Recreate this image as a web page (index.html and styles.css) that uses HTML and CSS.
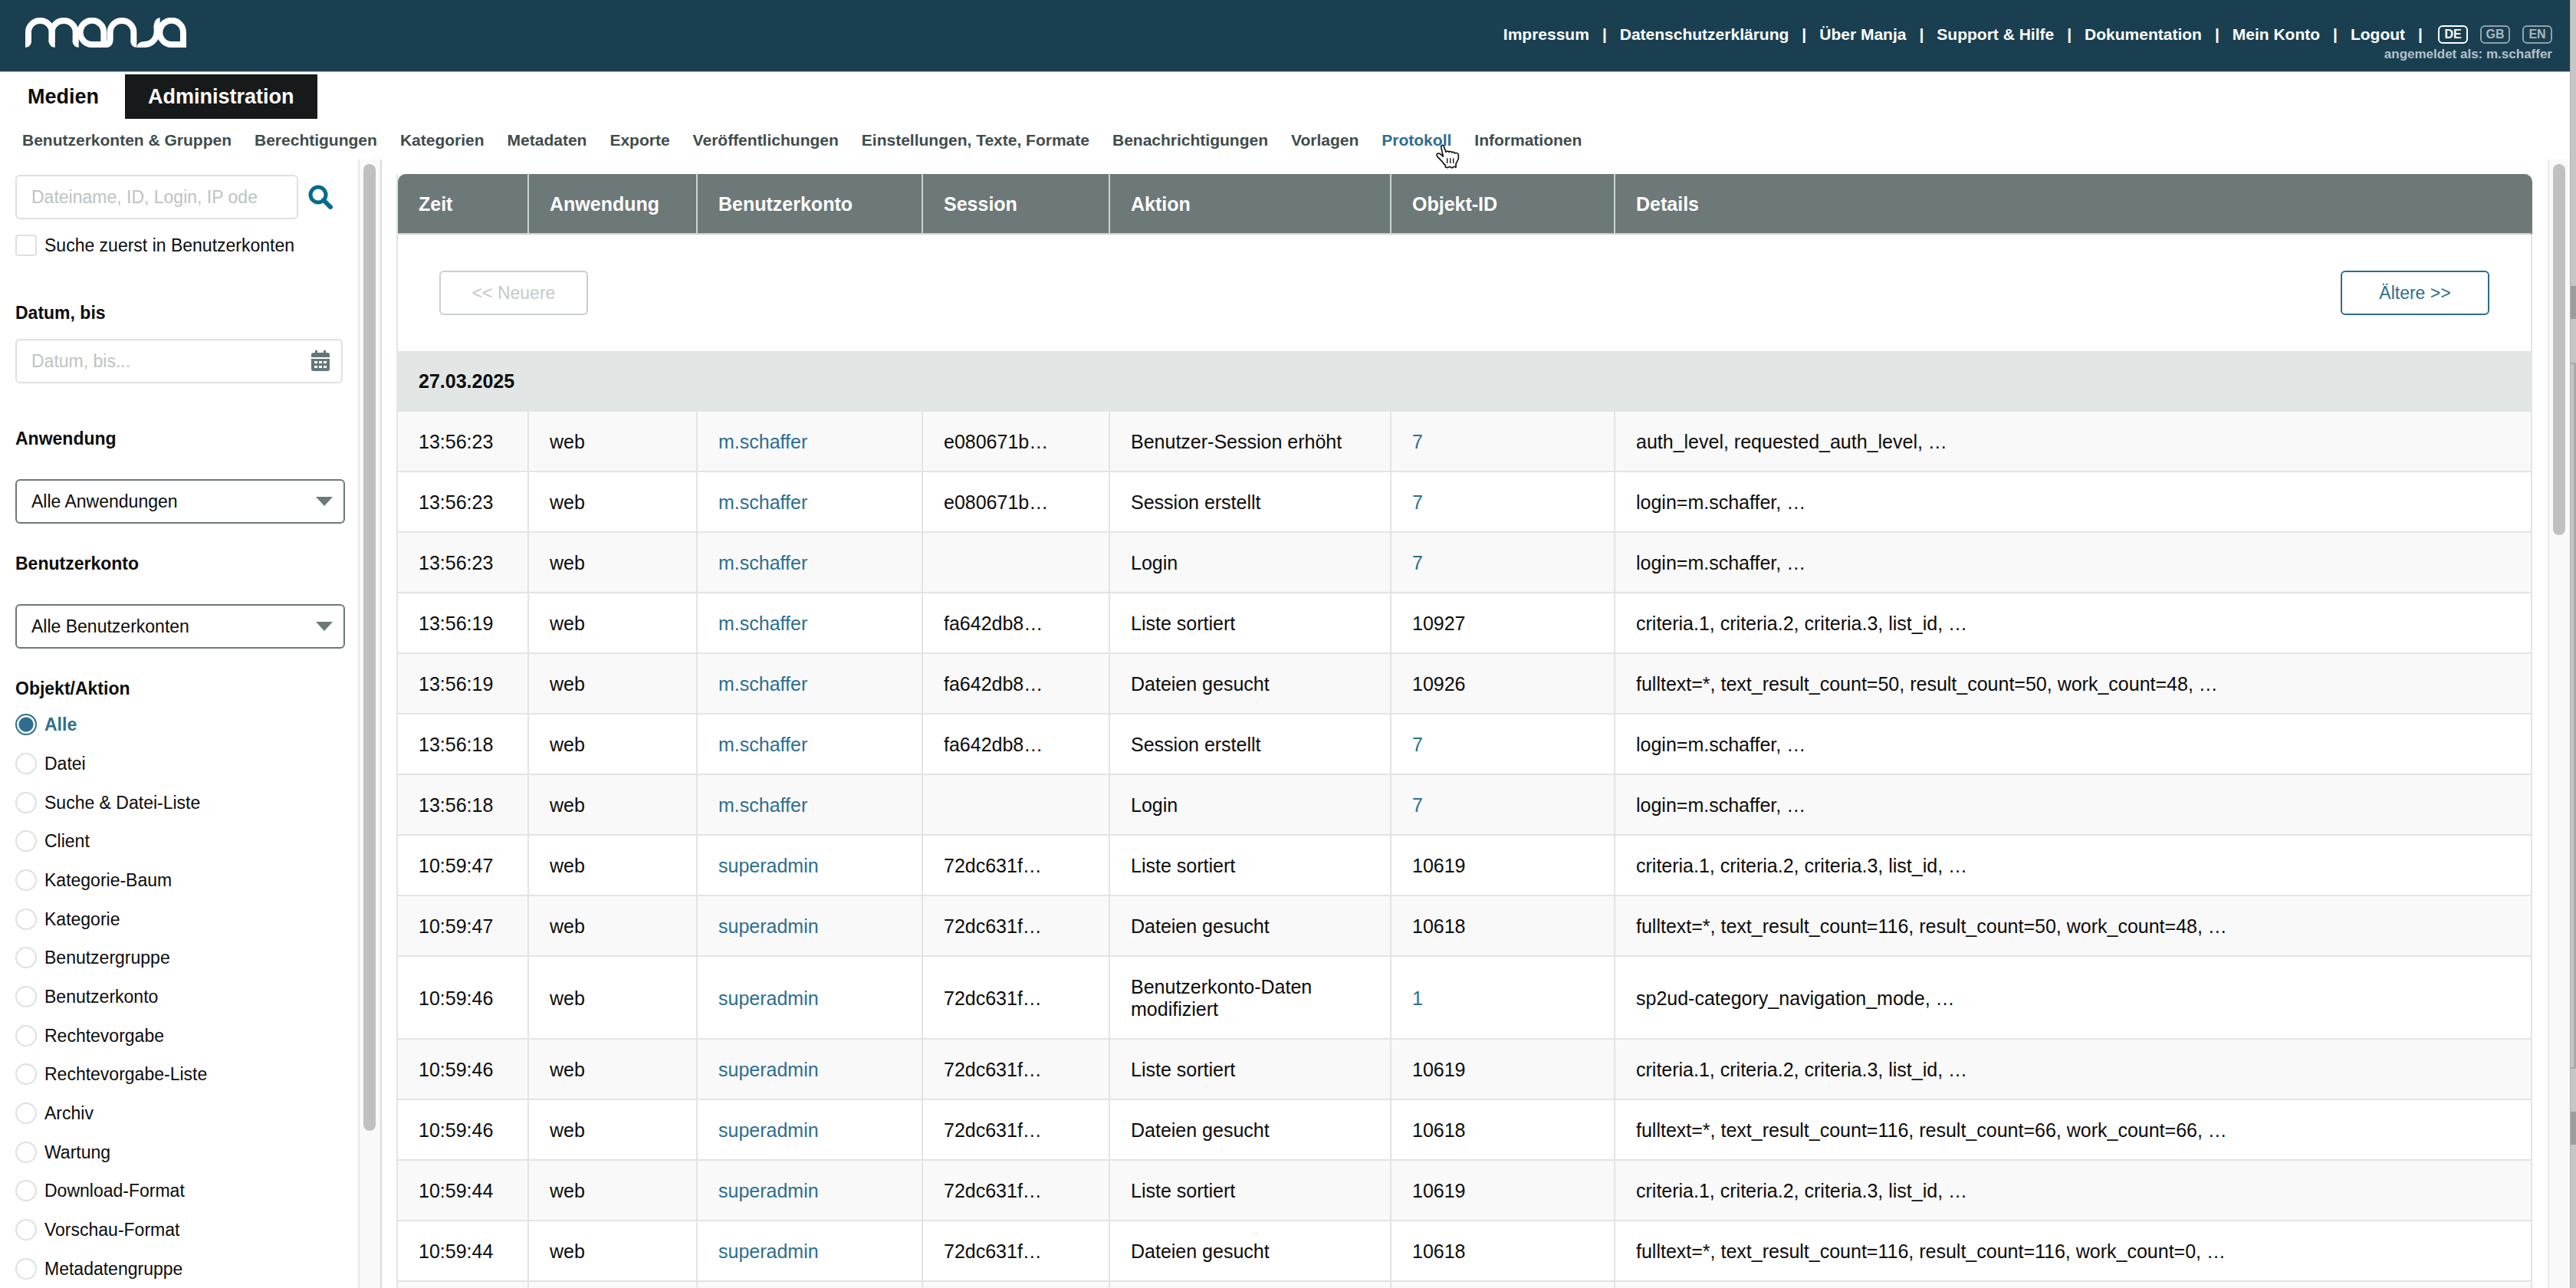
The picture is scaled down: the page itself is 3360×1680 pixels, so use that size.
FILE: index.html
```html
<!DOCTYPE html>
<html lang="de">

<head>
    <meta charset="UTF-8">
    <meta name="viewport" content="width=device-width, initial-scale=1.0">
    <title>Manja - Protokoll</title>
    <link rel="stylesheet" href="styles.css">
</head>

<body>
    <div class="app">
        <header>
            <a class="logo" href="#" aria-label="Manja">
                <svg viewBox="27 9 630 117" width="210" height="39">
                    <g fill="none" stroke="#fff" stroke-width="24">
                        <path d="M39 104V65a46 44 0 0 1 92 0V104" />
                        <path d="M131 104V65a46.500 44 0 0 1 93 0V104" />
                        <path d="M334 114H289a46 47 0 1 1 45-47z" />
                        <path d="M334 114H340Q359 114 359 92V65a46 44 0 0 1 92 0V100" />
                        <path d="M542 40V62C542 96 518 114 492 114" />
                        <path d="M645 114H600a46 47 0 1 1 45-47z" />
                    </g>
                    <g fill="#fff">
                        <path d="M27 100H51V104Q49 122 27 126z" />
                        <path d="M119 100H143V126Q121 122 119 104z" />
                        <path d="M212 100H236V126Q214 122 212 104z" />
                        <path d="M439 98H463V126Q440 122 439 104z" />
                        <path d="M463 126Q466 102 494 102V126z" />
                        <path d="M530 52V40Q532 12 554 9V52z" />
                    </g>
                </svg>
            </a>
            <div class="meta">
                <ul class="meta-nav">
                    <li><a href="#">Impressum</a></li>
                    <li><a href="#">Datenschutzerklärung</a></li>
                    <li><a href="#">Über Manja</a></li>
                    <li><a href="#">Support &amp; Hilfe</a></li>
                    <li><a href="#">Dokumentation</a></li>
                    <li><a href="#">Mein Konto</a></li>
                    <li><a href="#">Logout</a></li>
                    <li class="langs">
                        <a class="lang active" href="#">DE</a>
                        <a class="lang" href="#">GB</a>
                        <a class="lang" href="#">EN</a>
                    </li>
                </ul>
                <p class="user">angemeldet als: m.schaffer</p>
            </div>
        </header>

        <nav class="tabs">
            <a href="#">Medien</a>
            <a class="active" href="#">Administration</a>
        </nav>

        <nav class="subnav">
            <a href="#">Benutzerkonten &amp; Gruppen</a>
            <a href="#">Berechtigungen</a>
            <a href="#">Kategorien</a>
            <a href="#">Metadaten</a>
            <a href="#">Exporte</a>
            <a href="#">Veröffentlichungen</a>
            <a href="#">Einstellungen, Texte, Formate</a>
            <a href="#">Benachrichtigungen</a>
            <a href="#">Vorlagen</a>
            <a class="active" href="#">Protokoll
                <svg class="pointer" viewBox="24 25 96 99" width="32" height="33">
                    <path d="M44 36c-1-8 9-9 11-2l8 22c2-5 10-5 12 0 3-4 10-3 11 2 4-4 10-2 11 3 5-3 15-1 15 6v12c0 10-8 16-10 24v13l-8-3-8 5-8-5-9 4-8-2v-8c-6-3-8-7-11-12L30 74c-4-6-4-10 0-12 5-2 11 1 14 4l8 7z" fill="#fff" stroke="#111" stroke-width="5" stroke-linejoin="round" />
                    <path d="M68 80v20M80 80v20M92 80v20" stroke="#111" stroke-width="4" />
                </svg>
            </a>
            <a href="#">Informationen</a>
        </nav>

        <div class="columns">
            <aside>
                <form class="filter">
                    <div class="search">
                        <input class="text" type="text" aria-label="Suche" placeholder="Dateiname, ID, Login, IP ode">
                        <button type="button" class="search-btn" aria-label="Suchen">
                            <svg viewBox="0 0 32 32" width="32" height="32">
                                <circle cx="13" cy="13" r="10" fill="none" stroke="#046c8c" stroke-width="5" />
                                <path d="M20 20l9 9" stroke="#046c8c" stroke-width="6" stroke-linecap="round" />
                            </svg>
                        </button>
                    </div>
                    <label class="option accounts-first"><input type="checkbox">Suche zuerst in Benutzerkonten</label>

                    <label class="title" for="date">Datum, bis</label>
                    <div class="date">
                        <input class="text" type="text" id="date" placeholder="Datum, bis...">
                        <svg class="calendar" viewBox="0 0 24 27" width="24" height="27">
                            <path d="M5 0h3v3h8V0h3v3h2q3 0 3 3v3H0V6q0-3 3-3h2zM0 11h24v13q0 3-3 3H3q-3 0-3-3z" fill="#66757a" />
                            <path d="M4 14h4v3H4zM10 14h4v3h-4zM16 14h4v3h-4zM4 20h4v3H4zM10 20h4v3h-4zM16 20h4v3h-4z" fill="#fff" />
                        </svg>
                    </div>

                    <label class="title" for="app">Anwendung</label>
                    <div class="select">
                        <select id="app">
                            <option>Alle Anwendungen</option>
                        </select>
                    </div>

                    <label class="title" for="account">Benutzerkonto</label>
                    <div class="select">
                        <select id="account">
                            <option>Alle Benutzerkonten</option>
                        </select>
                    </div>

                    <fieldset>
                        <legend class="title">Objekt/Aktion</legend>
                        <div class="options">
                            <label class="option"><input type="radio" name="object" checked>Alle</label>
                            <label class="option"><input type="radio" name="object">Datei</label>
                            <label class="option"><input type="radio" name="object">Suche &amp; Datei-Liste</label>
                            <label class="option"><input type="radio" name="object">Client</label>
                            <label class="option"><input type="radio" name="object">Kategorie-Baum</label>
                            <label class="option"><input type="radio" name="object">Kategorie</label>
                            <label class="option"><input type="radio" name="object">Benutzergruppe</label>
                            <label class="option"><input type="radio" name="object">Benutzerkonto</label>
                            <label class="option"><input type="radio" name="object">Rechtevorgabe</label>
                            <label class="option"><input type="radio" name="object">Rechtevorgabe-Liste</label>
                            <label class="option"><input type="radio" name="object">Archiv</label>
                            <label class="option"><input type="radio" name="object">Wartung</label>
                            <label class="option"><input type="radio" name="object">Download-Format</label>
                            <label class="option"><input type="radio" name="object">Vorschau-Format</label>
                            <label class="option"><input type="radio" name="object">Metadatengruppe</label>
                        </div>
                    </fieldset>
                </form>
                <div class="track">
                    <div class="thumb thumb-side"></div>
                </div>
            </aside>

            <main>
                <table>
                    <colgroup>
                        <col class="col-time">
                        <col class="col-app">
                        <col class="col-account">
                        <col class="col-session">
                        <col class="col-action">
                        <col class="col-object">
                        <col>
                    </colgroup>
                    <thead>
                        <tr>
                            <th>Zeit</th>
                            <th>Anwendung</th>
                            <th>Benutzerkonto</th>
                            <th>Session</th>
                            <th>Aktion</th>
                            <th>Objekt-ID</th>
                            <th>Details</th>
                        </tr>
                    </thead>
                    <tbody>
                        <tr class="paging">
                            <td colspan="7">
                                <div class="pager">
                                    <button type="button" disabled>&lt;&lt; Neuere</button>
                                    <button type="button">Ältere &gt;&gt;</button>
                                </div>
                            </td>
                        </tr>
                        <tr class="day">
                            <th colspan="7">27.03.2025</th>
                        </tr>
                    </tbody>
                    <tbody class="entries">
                        <tr><td>13:56:23</td><td>web</td><td><a href="#">m.schaffer</a></td><td>e080671b…</td><td>Benutzer-Session erhöht</td><td><a href="#">7</a></td><td>auth_level, requested_auth_level, …</td></tr>
                        <tr><td>13:56:23</td><td>web</td><td><a href="#">m.schaffer</a></td><td>e080671b…</td><td>Session erstellt</td><td><a href="#">7</a></td><td>login=m.schaffer, …</td></tr>
                        <tr><td>13:56:23</td><td>web</td><td><a href="#">m.schaffer</a></td><td></td><td>Login</td><td><a href="#">7</a></td><td>login=m.schaffer, …</td></tr>
                        <tr><td>13:56:19</td><td>web</td><td><a href="#">m.schaffer</a></td><td>fa642db8…</td><td>Liste sortiert</td><td>10927</td><td>criteria.1, criteria.2, criteria.3, list_id, …</td></tr>
                        <tr><td>13:56:19</td><td>web</td><td><a href="#">m.schaffer</a></td><td>fa642db8…</td><td>Dateien gesucht</td><td>10926</td><td>fulltext=*, text_result_count=50, result_count=50, work_count=48, …</td></tr>
                        <tr><td>13:56:18</td><td>web</td><td><a href="#">m.schaffer</a></td><td>fa642db8…</td><td>Session erstellt</td><td><a href="#">7</a></td><td>login=m.schaffer, …</td></tr>
                        <tr><td>13:56:18</td><td>web</td><td><a href="#">m.schaffer</a></td><td></td><td>Login</td><td><a href="#">7</a></td><td>login=m.schaffer, …</td></tr>
                        <tr><td>10:59:47</td><td>web</td><td><a href="#">superadmin</a></td><td>72dc631f…</td><td>Liste sortiert</td><td>10619</td><td>criteria.1, criteria.2, criteria.3, list_id, …</td></tr>
                        <tr><td>10:59:47</td><td>web</td><td><a href="#">superadmin</a></td><td>72dc631f…</td><td>Dateien gesucht</td><td>10618</td><td>fulltext=*, text_result_count=116, result_count=50, work_count=48, …</td></tr>
                        <tr><td>10:59:46</td><td>web</td><td><a href="#">superadmin</a></td><td>72dc631f…</td><td>Benutzerkonto-Daten modifiziert</td><td><a href="#">1</a></td><td>sp2ud-category_navigation_mode, …</td></tr>
                        <tr><td>10:59:46</td><td>web</td><td><a href="#">superadmin</a></td><td>72dc631f…</td><td>Liste sortiert</td><td>10619</td><td>criteria.1, criteria.2, criteria.3, list_id, …</td></tr>
                        <tr><td>10:59:46</td><td>web</td><td><a href="#">superadmin</a></td><td>72dc631f…</td><td>Dateien gesucht</td><td>10618</td><td>fulltext=*, text_result_count=116, result_count=66, work_count=66, …</td></tr>
                        <tr><td>10:59:44</td><td>web</td><td><a href="#">superadmin</a></td><td>72dc631f…</td><td>Liste sortiert</td><td>10619</td><td>criteria.1, criteria.2, criteria.3, list_id, …</td></tr>
                        <tr><td>10:59:44</td><td>web</td><td><a href="#">superadmin</a></td><td>72dc631f…</td><td>Dateien gesucht</td><td>10618</td><td>fulltext=*, text_result_count=116, result_count=116, work_count=0, …</td></tr>
                        <tr><td></td><td></td><td></td><td></td><td></td><td></td><td></td></tr>
                    </tbody>
                </table>
            </main>
            <div class="track">
                <div class="thumb thumb-main"></div>
            </div>
        </div>
    </div>
    <!-- edge of the window behind -->
    <div class="behind">
        <div class="behind-top"></div>
        <div class="behind-bar"></div>
        <div class="behind-gap"></div>
        <div class="behind-pane"></div>
        <div class="behind-gap"></div>
        <div class="behind-bar"></div>
        <div class="behind-bottom"></div>
    </div>
</body>

</html>
```
FILE: styles.css
```css
* {
    box-sizing: border-box;
}

body {
    font-family: "Liberation Sans", Arial, sans-serif;
    font-size: 23px;
    line-height: 28px;
    color: #0c0c0c;
    background-color: #fff;
    margin: 0;
    height: 100vh;
    display: flex;
    overflow: hidden;
}

a {
    color: #2d6e90;
    text-decoration: none;
}

button,
input,
select {
    font: inherit;
    color: inherit;
    margin: 0;
}

.app {
    flex: 1;
    min-width: 0;
    display: flex;
    flex-direction: column;
}

/* Header */
header {
    background-color: #1a3f51;
    border-bottom: 1px solid #9fb3bc;
    height: 94px;
    flex-shrink: 0;
    display: flex;
    justify-content: space-between;
    padding: 23px 23px 0 33px;
}

.logo svg {
    display: block;
}

.meta {
    margin-top: 10px;
}

.meta-nav {
    list-style: none;
    margin: 0;
    padding: 0;
    display: flex;
    align-items: center;
    font-size: 21px;
    line-height: 24px;
    font-weight: bold;
    color: #fff;
}

.meta-nav li + li::before {
    content: "|";
    margin: 0 17px;
}

.meta-nav a {
    color: #fff;
}

.langs {
    display: flex;
    align-items: center;
    gap: 16px;
}

.meta-nav .langs::before {
    margin-right: 4px;
}

.meta-nav .lang {
    width: 39px;
    border: 2px solid #8fa3ad;
    border-radius: 6px;
    font-size: 16px;
    line-height: 20px;
    text-align: center;
    color: #a9b8bf;
}

.meta-nav .lang.active {
    color: #fff;
    border-color: #fff;
}

.user {
    margin: 4px 0 0;
    font-size: 17px;
    line-height: 20px;
    font-weight: bold;
    text-align: right;
    color: #b4c2c9;
}

/* Navigation */
.tabs {
    display: flex;
    gap: 4px;
    padding: 3px 6px 0;
    flex-shrink: 0;
}

.tabs a {
    padding: 0 30px;
    font-size: 27px;
    line-height: 58px;
    font-weight: bold;
    color: #0c0c0c;
}

.tabs .active {
    background-color: #171a1a;
    color: #fff;
}

.subnav {
    display: flex;
    gap: 30px;
    padding: 16px 29px 13px;
    font-size: 21px;
    line-height: 24px;
    font-weight: bold;
    flex-shrink: 0;
}

.subnav a {
    position: relative;
    color: #3f4c4c;
}

.subnav .active {
    color: #2d6e90;
}

.pointer {
    position: absolute;
    right: -12px;
    top: 17px;
}

/* Columns */
.columns {
    flex: 1;
    min-height: 0;
    display: flex;
}

aside {
    width: 498px;
    display: flex;
    border-right: 2px solid #d6dbdb;
    flex-shrink: 0;
}

.track {
    width: 29px;
    background-color: #f9f9f9;
    border-left: 2px solid #e8e8e8;
    padding: 6px 6px 0 5px;
    flex-shrink: 0;
}

.thumb {
    background-color: #c0c0c0;
    border-radius: 8px;
}

.thumb-side {
    height: 86%;
}

.thumb-main {
    height: 33%;
}

/* Filter */
.filter {
    flex: 1;
    display: flex;
    flex-direction: column;
    padding: 20px 17px 0 20px;
}

.search {
    display: flex;
    align-items: center;
    gap: 13px;
}

.text {
    width: 100%;
    height: 58px;
    padding: 0 19px;
    border: 2px solid #dde1e1;
    border-radius: 6px;
    background-color: #fff;
}

.text::placeholder {
    color: #bcc3c3;
    opacity: 1;
}

.search .text {
    width: 369px;
}

.search-btn {
    border: none;
    background: none;
    padding: 0;
    height: 32px;
    cursor: pointer;
}

.option {
    display: flex;
    align-items: center;
    gap: 10px;
}

.option input {
    appearance: none;
    width: 28px;
    height: 28px;
    border: 2px solid #dde1e1;
    border-radius: 4px;
    background-color: #fff;
}

.option input[type="radio"] {
    border-radius: 50%;
}

.option input[type="radio"]:checked {
    border-color: #2d6e90;
    background: radial-gradient(circle, #2d6e90 9px, #fff 10px);
}

.option:has(input[type="radio"]:checked) {
    color: #2d6e90;
    font-weight: bold;
}

.accounts-first {
    margin: 20px 0 22px;
}

.title {
    display: block;
    padding: 38px 0 0;
    font-weight: bold;
}

.date {
    position: relative;
    width: 427px;
    margin: 20px 0 20px;
}

.calendar {
    position: absolute;
    right: 17px;
    top: 15px;
}

.select {
    position: relative;
    margin-top: 39px;
    width: 430px;
}

.select::after {
    content: "";
    position: absolute;
    right: 16px;
    top: 23px;
    border: 11px solid transparent;
    border-top: 12px solid #6d7879;
    border-bottom: none;
    pointer-events: none;
}

select {
    appearance: none;
    display: block;
    width: 100%;
    height: 58px;
    padding: 0 19px;
    border: 2px solid #6d7879;
    border-radius: 6px;
    background-color: #fff;
}

fieldset {
    flex: 1;
    min-height: 0;
    border: none;
    margin: 0;
    padding: 8px 0 0;
}

legend {
    padding-left: 0;
}

.options {
    height: 100%;
    display: grid;
    grid-auto-rows: 1fr;
}

/* Log table */
main {
    flex: 1;
    min-width: 0;
    overflow: hidden;
    padding: 19px 20px 0 19px;
}

table {
    width: 100%;
    table-layout: fixed;
    border-collapse: separate;
    border-spacing: 0;
    border-left: 2px solid #e1e5e4;
    font-size: 25px;
    line-height: 29px;
}

.col-time {
    width: 171px;
}

.col-app {
    width: 220px;
}

.col-account {
    width: 294px;
}

.col-session {
    width: 244px;
}

.col-action {
    width: 367px;
}

.col-object {
    width: 292px;
}

th,
td {
    height: 79px;
    padding: 25px 27px 23px;
    border-right: 2px solid #e1e5e4;
    border-bottom: 2px solid #e1e5e4;
    text-align: left;
    vertical-align: middle;
}

thead th {
    background-color: #6d7879;
    border-color: #cdd3d3;
    color: #fff;
}

thead th:first-child {
    border-top-left-radius: 10px;
}

thead th:last-child {
    border-right-color: #6d7879;
    border-top-right-radius: 10px;
}

.paging td {
    padding: 47px 54px;
    border-bottom: none;
}

.pager {
    display: flex;
    justify-content: space-between;
}

.pager button {
    width: 194px;
    height: 58px;
    border: 2px solid #2d6e90;
    border-radius: 6px;
    background-color: #fff;
    color: #2d6e90;
    font-size: 23px;
    cursor: pointer;
}

.pager button:disabled {
    border-color: #c9cfcf;
    color: #c3c9c9;
}

.day th {
    background-color: #e1e5e4;
}

.entries tr:nth-child(odd) {
    background-color: #f9f9f9;
}

/* Window behind */
.behind {
    width: 8px;
    display: flex;
    flex-direction: column;
    background-color: #c6c6c6;
    border-left: 1px solid #b0b0b0;
}

.behind-top {
    flex: 377;
}

.behind-bar {
    flex: 43;
    background-color: #9c9c9c;
}

.behind-gap {
    flex: 57;
}

.behind-pane {
    flex: 926;
    border: solid #aaa;
    border-width: 2px 3px 2px 0;
}

.behind-bottom {
    flex: 189;
}
```
